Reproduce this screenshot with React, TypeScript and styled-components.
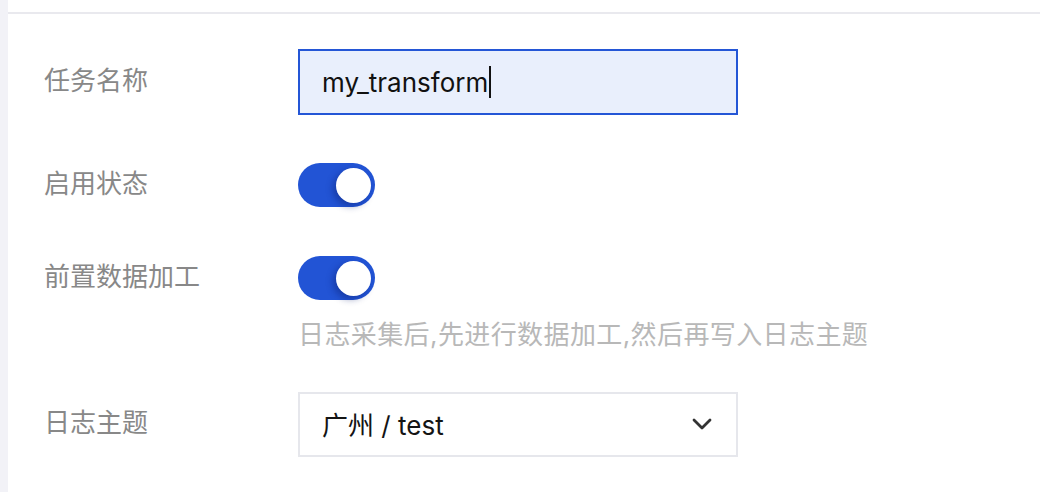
import React from 'react'
import styled, { createGlobalStyle } from 'styled-components'

const GlobalStyle = createGlobalStyle`
    html, body {
        margin: 0;
        padding: 0;
        background: #ffffff;
    }
    body {
        font-family: "Inter", "Noto Sans CJK SC", sans-serif;
        -webkit-font-smoothing: antialiased;
    }
`

const Page = styled.div`
    display: flex;
    width: 1040px;
    height: 492px;
    overflow: hidden;
`

const SideStrip = styled.div`
    width: 8px;
    flex-shrink: 0;
    background: #f2f2f7;
`

const Main = styled.div`
    flex: 1;
    display: flex;
    flex-direction: column;
`

const TopBar = styled.div`
    height: 12px;
    border-bottom: 2px solid #e9e9ee;
`

const Form = styled.div`
    display: flex;
    flex-direction: column;
    padding: 35px 0 0 36px;
`

const Row = styled.div<{ $top?: number }>`
    display: flex;
    align-items: flex-start;
    margin-top: ${props => props.$top || 0}px;
`

const Label = styled.div<{ $h: number }>`
    box-sizing: border-box;
    width: 254px;
    height: ${props => props.$h}px;
    padding-bottom: 8px;
    display: flex;
    align-items: center;
    font-size: 26px;
    color: #888888;
    flex-shrink: 0;
`

const Control = styled.div`
    display: flex;
    flex-direction: column;
`

const InputBox = styled.div`
    box-sizing: border-box;
    width: 440px;
    height: 66px;
    border: 2px solid #2456d6;
    background: #e9effc;
    display: flex;
    align-items: center;
    padding-left: 22px;
    font-size: 26px;
    color: #111111;
`

const Caret = styled.span`
    display: inline-block;
    width: 2px;
    height: 32px;
    background: #111111;
    margin-left: 1px;
`

const Switch = styled.div`
    box-sizing: border-box;
    width: 77px;
    height: 44px;
    border-radius: 22px;
    background: #2254d5;
    display: flex;
    align-items: center;
    justify-content: flex-end;
    padding: 0 4px;
`

const Knob = styled.div`
    width: 35px;
    height: 35px;
    border-radius: 50%;
    background: #ffffff;
    box-shadow: -3px 3px 7px rgba(12, 30, 110, 0.45);
`

const Helper = styled.div`
    margin-top: 18px;
    font-size: 26px;
    line-height: 34px;
    letter-spacing: 0.4px;
    color: #b8b8b8;
    white-space: nowrap;
`

const SelectBox = styled.div`
    box-sizing: border-box;
    width: 440px;
    height: 65px;
    border: 2px solid #e6e7ec;
    background: #ffffff;
    display: flex;
    align-items: center;
    justify-content: space-between;
    padding: 0 24px 2px 22px;
    font-size: 26px;
    color: #141414;
`

const Chevron = () => (
    <svg width="20" height="12" viewBox="0 0 20 12" fill="none">
        <polyline points="2,2 10,10 18,2" stroke="#333333" strokeWidth="2.8" strokeLinecap="round" strokeLinejoin="round" />
    </svg>
)

const Toggle = () => (
    <Switch>
        <Knob />
    </Switch>
)

export default function App() {
    return (
        <Page>
            <GlobalStyle />
            <SideStrip />
            <Main>
                <TopBar />
                <Form>
                    <Row>
                        <Label $h={66}>任务名称</Label>
                        <InputBox>
                            my_transform<Caret />
                        </InputBox>
                    </Row>
                    <Row $top={48}>
                        <Label $h={44}>启用状态</Label>
                        <Toggle />
                    </Row>
                    <Row $top={49}>
                        <Label $h={44}>前置数据加工</Label>
                        <Control>
                            <Toggle />
                            <Helper>日志采集后,先进行数据加工,然后再写入日志主题</Helper>
                        </Control>
                    </Row>
                    <Row $top={40}>
                        <Label $h={65}>日志主题</Label>
                        <SelectBox>
                            <span>广州 / test</span>
                            <Chevron />
                        </SelectBox>
                    </Row>
                </Form>
            </Main>
        </Page>
    )
}
